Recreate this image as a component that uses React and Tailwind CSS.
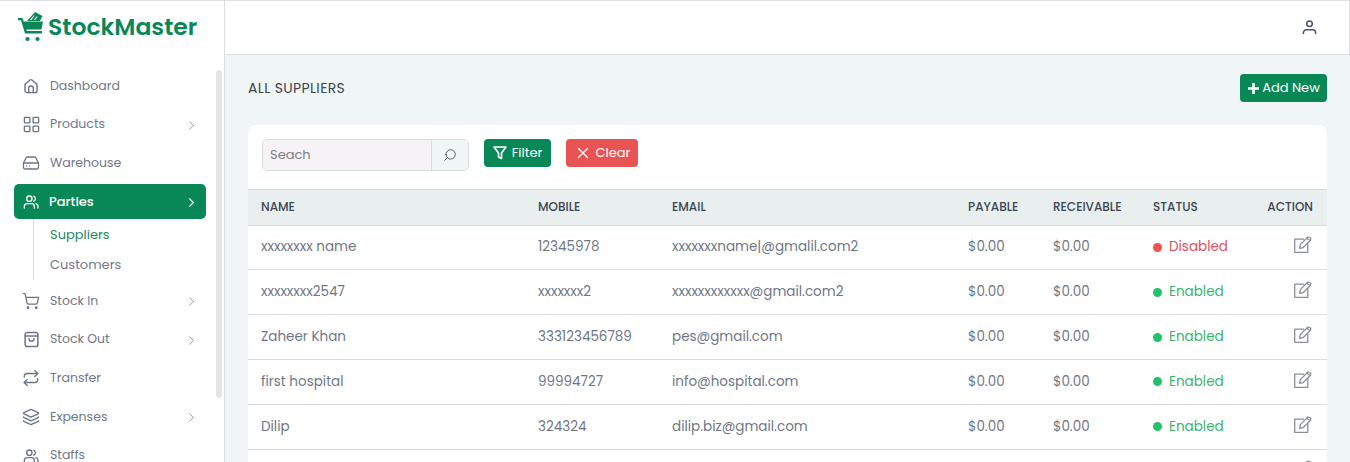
import React from "react";
import {
  LayoutGrid, HardDrive, ChevronRight, ShoppingCart, Repeat, Layers, Search, X,
} from "lucide-react";

const font = "font-['Poppins','Inter','Noto_Sans',sans-serif]";

const Party = ({ className }) => (
  <svg className={className} viewBox="0 0 24 24" fill="none" stroke="currentColor" strokeWidth="2" strokeLinecap="round">
    <circle cx="9.5" cy="7" r="4" />
    <path d="M2 21v-2.5a4 4 0 0 1 4-4h7a4 4 0 0 1 4 4V21" />
    <path d="M16 3.3a4 4 0 0 1 0 7.4" />
    <path d="M19.5 14.5a4 4 0 0 1 3 3.9V21" />
  </svg>
);

const Bag = ({ className }) => (
  <svg className={className} viewBox="0 0 24 24" fill="none" stroke="currentColor" strokeWidth="2.1" strokeLinecap="round" strokeLinejoin="round">
    <path d="M6 2h12a3 3 0 0 1 3 3v14a3 3 0 0 1-3 3H6a3 3 0 0 1-3-3V5a3 3 0 0 1 3-3z" />
    <path d="M3 7h18" />
    <path d="M8.5 11a3.5 3.5 0 0 0 7 0" />
  </svg>
);

const Home = ({ className }) => (
  <svg className={className} viewBox="0 0 24 24" fill="none" stroke="currentColor" strokeWidth="2.1" strokeLinecap="round" strokeLinejoin="round">
    <path d="M3 10.5a2.5 2.5 0 0 1 1-2L10.5 3a2.5 2.5 0 0 1 3 0L20 8.5a2.5 2.5 0 0 1 1 2V19a3 3 0 0 1-3 3H6a3 3 0 0 1-3-3z" />
    <path d="M8.5 22v-6.5a3.5 3.5 0 0 1 7 0V22" />
  </svg>
);

const Edit = ({ className }) => (
  <svg className={className} viewBox="0 0 18 17" fill="none" stroke="currentColor" strokeWidth="1.3" strokeLinejoin="round">
    <path d="M10 3.2H.7v13.1h13.1V7.6" />
    <path d="M6.3 8.6 13.9 1l2.9 1-.2 2.3-7.6 7.4-3.3.6z" />
    <path d="M12.8 2.2l3 2.4" />
  </svg>
);

const menuTop = [
  { label: "Dashboard", icon: Home, size: "size-[16px]" },
  { label: "Products", icon: LayoutGrid, size: "size-[19px]", more: true },
  { label: "Warehouse", icon: HardDrive, size: "size-[18px]" },
];
const menuBottom = [
  { label: "Stock In", icon: ShoppingCart, size: "size-[18px]", more: true },
  { label: "Stock Out", icon: Bag, size: "size-[17px]", more: true },
  { label: "Transfer", icon: Repeat, size: "size-[18px]" },
  { label: "Expenses", icon: Layers, size: "size-[18px]", more: true },
  { label: "Staffs", icon: Party, size: "size-[16px]" },
];

const rows = [
  ["xxxxxxxx name", "12345978", "xxxxxxxname|@gmalil.com2", false],
  ["xxxxxxxx2547", "xxxxxxx2", "xxxxxxxxxxxx@gmail.com2", true],
  ["Zaheer Khan", "333123456789", "pes@gmail.com", true],
  ["first hospital", "99994727", "info@hospital.com", true],
  ["Dilip", "324324", "dilip.biz@gmail.com", true],
  ["", "", "", true],
];

function MenuItem({ item }) {
  const Icon = item.icon;
  return (
    <div className="flex h-[35px] shrink-0 items-center pl-[9px] pr-[7px] text-[12.5px] text-[#6f7787]">
      <span className="flex w-[16px] shrink-0 justify-center">
        <Icon className={`${item.size} shrink-0 text-[#6b7487]`} strokeWidth={1.7} />
      </span>
      <span className="ml-[11px] flex-1">{item.label}</span>
      {item.more && <ChevronRight className="mt-[1px] size-[15px] text-[#7b8494]" strokeWidth={1.3} />}
    </div>
  );
}

function Logo() {
  return (
    <div className="flex h-[54px] items-center pb-[3px] pl-[18px]">
      <svg className="h-[30px] w-[26px]" viewBox="0 0 26 30" fill="#078856">
        <path d="M0 6h4.4l1.3 3.5H25l-1.6 8H8.4l.5 1.5H24v2.6H7L3 8.2H0z" />
        <path d="M9 9 17 0l7.5 4-2.6 5z" />
        <path d="M15.5 3.5 12 8h1.4l3.4-4.3zM18.5 4.5 15.8 8h1.3l2.6-3.3z" fill="#fff" />
        <circle cx="9.5" cy="27" r="2.1" />
        <circle cx="19.5" cy="27" r="2.1" />
      </svg>
      <span className="ml-[4px] text-[23.5px] font-semibold leading-none text-[#078856]">StockMaster</span>
    </div>
  );
}

function StatusCell({ enabled }) {
  return (
    <span className={`flex items-center gap-[7px] ${enabled ? "text-[#39b56f]" : "text-[#e05260]"}`}>
      <span className={`size-[9px] rounded-full ${enabled ? "bg-[#22c36a]" : "bg-[#ef5350]"}`} />
      {enabled ? "Enabled" : "Disabled"}
    </span>
  );
}

export default function App() {
  return (
    <div className={`flex h-[462px] w-[1350px] overflow-hidden border-t border-[#dcdfe1] bg-white ${font}`}>
      <aside className="relative w-[225px] shrink-0 overflow-hidden border-r border-[#dcdfe1] bg-white">
        <Logo />
        <div className="mt-[13.6px] flex flex-col pl-[14px] pr-[18px]">
          <div className="flex flex-col gap-[3.6px]">
            {menuTop.map((m) => <MenuItem key={m.label} item={m} />)}
            <div className="flex h-[35px] items-center rounded-[5px] bg-[#078856] pl-[9px] pr-[7px] text-[13px] font-medium text-white">
              <Party className="size-[16px] shrink-0" />
              <span className="ml-[10px] flex-1">Parties</span>
              <ChevronRight className="mt-[1px] size-[15px]" strokeWidth={1.8} />
            </div>
          </div>
          <div className="ml-[19px] flex h-[61px] flex-col border-l border-[#d5d8dc] pl-[16px] text-[13px]">
            <span className="flex h-[30px] items-center text-[#25875f]">Suppliers</span>
            <span className="flex h-[30px] items-center text-[#6f7787]">Customers</span>
          </div>
          <div className="mt-[3.4px] flex flex-col gap-[3.6px]">
            {menuBottom.map((m) => <MenuItem key={m.label} item={m} />)}
          </div>
        </div>
        <div className="absolute left-[216px] top-[69px] h-[328px] w-[6px] rounded-full bg-[#e4e5e6]" />
      </aside>

      <div className="flex min-w-0 flex-1 flex-col bg-[#eff6f5]">
        <header className="flex h-[54px] shrink-0 items-center justify-end border-b border-r border-[#dcdfe1] bg-white pr-[32px]">
          <svg className="size-[15px] text-[#4b5563]" viewBox="0 0 16 16" fill="none" stroke="currentColor" strokeWidth="1.6">
            <circle cx="8" cy="4" r="3" />
            <path d="M1.5 15v-1.5a3 3 0 0 1 3-3h7a3 3 0 0 1 3 3V15" />
          </svg>
        </header>
        <main className="flex flex-col pl-[23px] pr-[23px]">
          <div className="mt-[19px] flex h-[28px] items-center justify-between">
            <h1 className="text-[14px] tracking-[0.35px] text-[#3d4654]">ALL SUPPLIERS</h1>
            <button className="flex h-[28px] w-[87px] items-center justify-center gap-[1px] rounded-[4px] bg-[#078856] text-[13px] text-white">
              <svg className="size-[13px]" viewBox="0 0 13 13" fill="none" stroke="currentColor" strokeWidth="2.6">
                <path d="M6.5 1v11M1 6.5h11" />
              </svg>
              <span className="ml-[1px]">Add New</span>
            </button>
          </div>
          <section className="mt-[23px] w-[1079px] overflow-hidden rounded-t-[7px] bg-white">
            <div className="flex h-[64px] items-start pl-[14px] pt-[14px]">
              <div className="flex h-[32px] w-[207px] overflow-hidden rounded-[5px] border border-[#d9dcdf]">
                <span className="flex flex-1 items-center bg-[#f6f3f6] pl-[7px] text-[13px] text-[#7a808b]">Seach</span>
                <span className="flex w-[37px] items-center justify-center border-l border-[#d9dcdf] bg-[#eff6f5]">
                  <Search className="size-[14px] -scale-x-100 text-[#374151]" strokeWidth={1.4} />
                </span>
              </div>
              <button className="ml-[15px] flex h-[28px] w-[67px] items-center justify-center gap-[5px] rounded-[4px] bg-[#078856] text-[13px] text-white">
                <svg className="size-[14px]" viewBox="0 0 14 14" fill="none" stroke="currentColor" strokeWidth="1.7" strokeLinejoin="round">
                  <path d="M1 1h12L8.5 7v5.5l-3-1.5V7z" />
                </svg>
                Filter
              </button>
              <button className="ml-[15px] flex h-[28px] w-[72px] items-center justify-center gap-[4px] rounded-[4px] bg-[#e85454] text-[13px] text-white">
                <X className="size-[18px]" strokeWidth={1.6} />
                Clear
              </button>
            </div>
            <table className="w-full table-fixed border-collapse text-left text-[13.5px] text-[#6f7787]">
              <colgroup>
                <col className="w-[290px]" />
                <col className="w-[134px]" />
                <col className="w-[296px]" />
                <col className="w-[85px]" />
                <col className="w-[100px]" />
                <col className="w-[100px]" />
                <col />
              </colgroup>
              <thead>
                <tr className="h-[35.6px] border-y border-[#d9dcdf] bg-[#e8efee] text-[12px] text-[#3d4654]">
                  <th className="pl-[13px] font-medium">NAME</th>
                  <th className="font-medium">MOBILE</th>
                  <th className="font-medium">EMAIL</th>
                  <th className="font-medium">PAYABLE</th>
                  <th className="font-medium">RECEIVABLE</th>
                  <th className="font-medium">STATUS</th>
                  <th className="pr-[14px] text-right font-medium">ACTION</th>
                </tr>
              </thead>
              <tbody>
                {rows.map((r, i) => (
                  <tr key={i} className="h-[44.8px] border-b border-[#d9dcdf]">
                    <td className="pl-[13px]">{r[0]}</td>
                    <td>{r[1]}</td>
                    <td>{r[2]}</td>
                    <td>{r[0] && "$0.00"}</td>
                    <td>{r[0] && "$0.00"}</td>
                    <td>{r[0] && <StatusCell enabled={r[3]} />}</td>
                    <td className="pr-[15px]">
                      <div className="flex justify-end">
                        <Edit className="-mt-[5px] h-[17px] w-[18px] text-[#8a8f98]" />
                      </div>
                    </td>
                  </tr>
                ))}
              </tbody>
            </table>
          </section>
        </main>
      </div>
    </div>
  );
}
